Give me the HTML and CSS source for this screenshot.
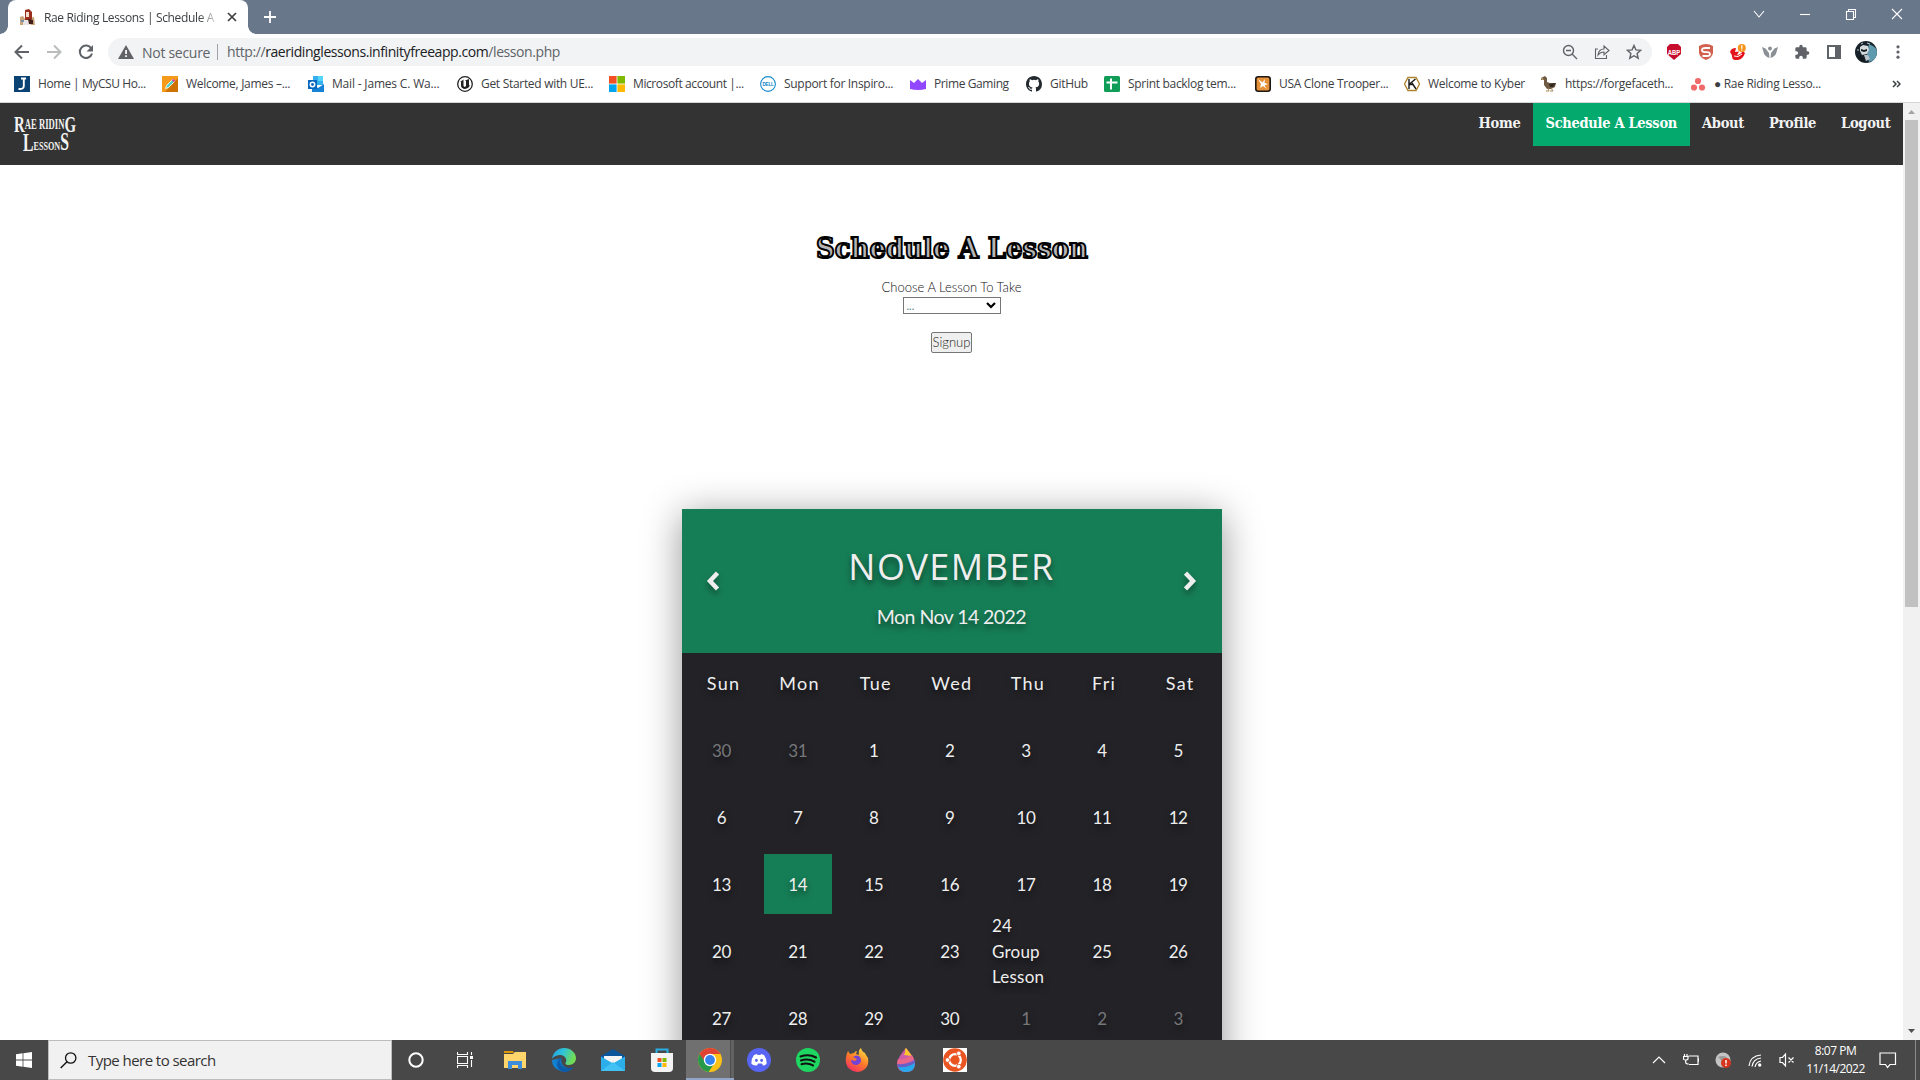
FILE: index.html
```html
<!DOCTYPE html>
<html lang="en">
<head>
<meta charset="utf-8">
<title>Rae Riding Lessons | Schedule A Lesson</title>
<link rel="stylesheet" href="styles.css">
</head>
<body>
<div class="tabstrip">
  <div class="tab">
    <svg class="favicon" width="15" height="16" viewBox="0 0 15 16"><path d="M0 8l3-1 2 3v6H0zM10 9l4-1 1 8h-5z" fill="#c9a27a"/><path d="M5 1l4-1 3 3v7l-2 3-5-2z" fill="#9b2f1d"/><path d="M6 3h3v5H6z" fill="#f5dfcc"/><path d="M3 11h8v5H3z" fill="#e9e5e4"/><path d="M8 10l5 1v4H9z" fill="#402019"/><path d="M1 11h3v2H1z" fill="#7394ab"/></svg>
    <span class="tab-title">Rae Riding Lessons | Schedule A L</span>
    <svg class="tab-close" width="10" height="10" viewBox="0 0 10 10"><path d="M1 1l8 8M9 1L1 9" stroke="#3c4043" stroke-width="1.7"/></svg>
  </div>
  <svg class="newtab" width="14" height="14" viewBox="0 0 14 14"><path d="M7 1v12M1 7h12" stroke="#fff" stroke-width="1.8"/></svg>
  <div class="window-buttons">
    <svg viewBox="0 0 12 12"><path d="M1 3l5 6 5-6" /></svg>
    <svg viewBox="0 0 12 12"><path d="M1 6.500h10"/></svg>
    <svg viewBox="0 0 12 12"><path d="M1.500 3.500h7v8h-7zM3.500 3.500v-2h7v8h-2"/></svg>
    <svg viewBox="0 0 12 12"><path d="M1 1l10 10M11 1L1 11"/></svg>
  </div>
</div>

<div class="toolbar">
  <div class="nav-icons">
    <svg viewBox="0 0 16 16"><path d="M15 8H2M8 1.500L1.500 8 8 14.500" fill="none" stroke="#5f6368" stroke-width="2"/></svg>
    <svg viewBox="0 0 16 16"><path d="M1 8h13M8 1.500L14.500 8 8 14.500" fill="none" stroke="#babcbe" stroke-width="2"/></svg>
    <svg viewBox="0 0 16 16"><path d="M13.300 4.500A6.200 6.200 0 1 0 14 9.500" fill="none" stroke="#5f6368" stroke-width="2"/><path d="M15 1v6.500H8.500z" fill="#5f6368"/></svg>
  </div>
  <div class="omnibox">
    <svg width="16" height="14" viewBox="0 0 16 14"><path d="M8 0l8 14H0z" fill="#5f6368"/><path d="M7.200 5h1.700v4H7.200zM7.200 10.300h1.700V12H7.200z" fill="#fff"/></svg>
    <span class="insecure">Not secure</span>
    <span class="divider"></span>
    <span class="url">http://<b>raeridinglessons.infinityfreeapp.com</b>/lesson.php</span>
    <div class="omni-icons">
      <svg viewBox="0 0 16 16"><g fill="none" stroke="#5f6368" stroke-width="1.400"><circle cx="6.500" cy="6.500" r="5"/><path d="M10 10l5 5M4 6.500h5"/></g></svg>
      <svg viewBox="0 0 16 16"><path d="M4 5H1.500v9.500h11V11M4 11c.5-4 2.500-6 6-6V2l5 4.500-5 4.200V8C7.500 8 5.500 9 4 11z" fill="none" stroke="#5f6368" stroke-width="1.100"/></svg>
      <svg viewBox="0 0 16 16"><path d="M8 1.500l1.900 4.400 4.800.4-3.600 3.200 1.100 4.700L8 11.700l-4.200 2.500 1.100-4.700-3.600-3.200 4.800-.4z" fill="none" stroke="#5f6368" stroke-width="1.400"/></svg>
    </div>
  </div>
  <div class="extensions">
    <svg viewBox="0 0 16 16"><path d="M4 0h8l3 3v7l-7 6-7-6V3z" fill="#c70d2c"/><text x="1.800" y="10.500" font-size="7" font-weight="bold" fill="#fff" class="mini" textLength="12.500" lengthAdjust="spacingAndGlyphs">ABP</text></svg>
    <svg viewBox="0 0 16 16"><path d="M1 2q7-4 14 0v7q-1 5-7 7-6-2-7-7z" fill="#d2604f"/><path d="M12 4H7.500Q4 4 4 6t3 2.200h2Q12 8.200 12 10.200T8.500 12H4.500" fill="none" stroke="#fff" stroke-width="1.800"/></svg>
    <svg viewBox="0 0 16 16"><path d="M0 8Q1 4 6 4L5 8l4-.5L7 11q3 0 6-4l2 2q-2 6-7 7-6 1-6-4 0-1-2-4z" fill="#e3121b"/><path d="M4 12q4 2 8-2" stroke="#fff" fill="none"/><circle cx="11.800" cy="4" r="4" fill="#f7941d"/><path d="M11.200 1.300h1.200v3.400h-1.200zM11.200 5.400h1.200v1.200h-1.200z" fill="#fff"/></svg>
    <svg viewBox="0 0 16 16"><g fill="#8a9095"><circle cx="8" cy="4.500" r="2"/><path d="M0 3l3.500 1.500L7 9l.5 5Q2 12 1.500 8zM16 3l-3.500 1.500L9 9l-.5 5Q14 12 14.500 8z"/></g></svg>
    <svg viewBox="0 0 24 24"><path d="M20.500 11H19V7a2 2 0 0 0-2-2h-4V3.500a2.500 2.500 0 0 0-5 0V5H4a2 2 0 0 0-2 2v3.800h1.500a2.700 2.700 0 0 1 0 5.400H2V20a2 2 0 0 0 2 2h3.800v-1.500a2.700 2.700 0 0 1 5.400 0V22H17a2 2 0 0 0 2-2v-4h1.500a2.500 2.500 0 0 0 0-5z" fill="#5f6368"/></svg>
    <svg viewBox="0 0 16 16"><path d="M2 2h12v12H2z" fill="#fff" stroke="#5f6368" stroke-width="2"/><path d="M9 2h5v12H9z" fill="#5f6368"/></svg>
    <svg class="avatar" viewBox="0 0 22 22"><circle cx="11" cy="11" r="11" fill="#17222a"/><path d="M14 3q8 3 8 8 0 8-8 10l-2-8z" fill="#5f9aae"/><path d="M5 6l3-2 5 1 1 4-2 4-5 1-2-4z" fill="#d5dadd"/><path d="M6 8l3 1 3-1v2l-3 1-3-1zM3 14l3 1 4 3-1 3-4-2z" fill="#161b1f"/><path d="M9 14l4 0 2 4-4 2z" fill="#b9c5ca"/><path d="M6 3l2-1M12 2l3 1M3 8v2" stroke="#b7c3c9"/></svg>
    <svg viewBox="0 0 16 16"><g fill="#5f6368"><circle cx="8" cy="2.800" r="1.600"/><circle cx="8" cy="8" r="1.600"/><circle cx="8" cy="13.200" r="1.600"/></g></svg>
  </div>
</div>

<div class="bookmarks">
  <a><svg viewBox="0 0 16 16"><path d="M0 0h16v16H0z" fill="#0b4274"/><path d="M7 2.500h5M9.800 2.500V10q0 3.500-5.300 3" fill="none" stroke="#fff" stroke-width="1.900"/></svg><span class="tight">Home | MyCSU Ho...</span></a>
  <a><svg viewBox="0 0 16 16"><path d="M0 0h16v16H0z" fill="#f59a1b"/><path d="M16 2v14H3z" fill="#cf7206"/><path d="M3.500 12.500l1-3 6.500-6.500 2 2L6.500 11.500z" fill="#55cfc4" stroke="#fff" stroke-width=".8"/><path d="M10.500 3.500l2 2" stroke="#d43f92" stroke-width="2"/></svg><span>Welcome, James –...</span></a>
  <a><svg viewBox="0 0 16 16"><path d="M5 0h10v9H5z" fill="#35b0ee"/><path d="M10 0h5v5h-5z" fill="#55d5fa"/><path d="M4 8l6 4 6-4v8H4z" fill="#1682d5"/><path d="M0 4h9v9H0z" fill="#0766bd"/><circle cx="4.500" cy="8.500" r="2.200" fill="none" stroke="#fff" stroke-width="1.500"/></svg><span class="loose">Mail - James C. Wa...</span></a>
  <a><svg viewBox="0 0 16 16"><circle cx="8" cy="8" r="7.300" fill="#fff" stroke="#222" stroke-width="1.300"/><path d="M3 6l3.500-2.500V10l1.200 1L9 10V5L8 4.500l4-1.500v6.500l1-.5q-1 3.500-5 4-3.500-.5-4-3V6z" fill="#222"/></svg><span>Get Started with UE...</span></a>
  <a><svg viewBox="0 0 16 16"><path d="M0 0h7.600v7.600H0z" fill="#f25022"/><path d="M8.400 0H16v7.600H8.400z" fill="#7fba00"/><path d="M0 8.400h7.600V16H0z" fill="#00a4ef"/><path d="M8.400 8.400H16V16H8.400z" fill="#ffb900"/></svg><span class="tight">Microsoft account |...</span></a>
  <a><svg viewBox="0 0 16 16"><circle cx="8" cy="8" r="7.400" fill="#fff" stroke="#168ccb" stroke-width="1.100"/><text x="2.500" y="10" font-size="5.500" font-weight="bold" fill="#0b83c6" class="mini" textLength="11" lengthAdjust="spacingAndGlyphs">DELL</text></svg><span>Support for Inspiro...</span></a>
  <a><svg viewBox="0 0 16 16"><path d="M0 4l4 3 4-4 4 4 4-3v9q-8 2-16 0z" fill="#9147ff"/></svg><span class="tight">Prime Gaming</span></a>
  <a><svg viewBox="0 0 16 16"><path fill="#24292f" d="M8 0C3.580 0 0 3.580 0 8c0 3.540 2.290 6.530 5.470 7.590.4.070.55-.17.55-.38 0-.19-.01-.82-.01-1.490-2.010.37-2.530-.49-2.690-.94-.09-.23-.48-.94-.82-1.130-.28-.15-.68-.52-.01-.53.63-.01 1.080.58 1.230.82.72 1.210 1.870.87 2.330.66.070-.52.28-.87.51-1.070-1.780-.2-3.640-.89-3.640-3.950 0-.87.31-1.590.82-2.150-.08-.2-.36-1.020.08-2.120 0 0 .67-.21 2.200.82a7.600 7.600 0 0 1 4 0c1.530-1.040 2.200-.82 2.200-.82.44 1.100.16 1.920.08 2.120.51.56.82 1.270.82 2.150 0 3.070-1.870 3.750-3.650 3.950.29.25.54.73.54 1.480 0 1.070-.01 1.930-.01 2.200 0 .21.15.46.55.38A8 8 0 0 0 16 8c0-4.420-3.580-8-8-8z"/></svg><span>GitHub</span></a>
  <a><svg viewBox="0 0 16 16"><rect width="16" height="16" rx="1.500" fill="#0f9d58"/><path d="M7 2.500v11M2.500 6.500h11" stroke="#fff" stroke-width="2"/></svg><span>Sprint backlog tem...</span></a>
  <a><svg viewBox="0 0 16 16"><rect x=".8" y=".8" width="14.400" height="14.400" rx="2.500" fill="#e69138" stroke="#1c1712" stroke-width="1.600"/><path d="M3 3l4.500 3.500L10 3l-.5 4L13 8l-3.500 1.500L12 13l-4-3-3 2 1-4z" fill="#fff"/></svg><span>USA Clone Trooper...</span></a>
  <a><svg viewBox="0 0 16 16"><path d="M4 1.500h8l3.500 6.500L12 14.500H4L.5 8z" fill="#fff" stroke="#ae852a" stroke-width="1.400"/><path d="M5 3v10M5.500 8l6-5M8 7l4 6M5.500 8.500h3" stroke="#171717" stroke-width="1.400" fill="none"/></svg><span>Welcome to Kyber</span></a>
  <a><svg viewBox="0 0 16 16"><path d="M0 2l4-2 2 2v4l3 1h6l-1 4-4 2H6L3 9V4L0 4z" fill="#6f5b43"/><path d="M8 8l7-1-3 4H9z" fill="#322820"/><path d="M7 12l1 3H5M10 12l2 3H9" stroke="#a98758" fill="none"/><path d="M0 2l3 1-2 1z" fill="#d4bb7b"/></svg><span>https://forgefaceth...</span></a>
  <a><svg viewBox="0 0 16 16"><g fill="#f06a6a"><circle cx="8" cy="5" r="3.100"/><circle cx="4" cy="11.500" r="3.100"/><circle cx="12" cy="11.500" r="3.100"/></g></svg><span>● Rae Riding Lesso...</span></a>
  <svg class="more" viewBox="0 0 9 8"><path d="M1 1l3 3-3 3M5 1l3 3-3 3" fill="none" stroke="#3c4043" stroke-width="1.500"/></svg>
</div>

<div class="viewport">
  <div class="page">
    <header class="site-nav">
      <svg class="logo" width="66" height="42" viewBox="0 0 66 42">
        <g class="logo-text">
          <text x="0" y="19" textLength="62" lengthAdjust="spacingAndGlyphs"><tspan font-size="24">R</tspan><tspan font-size="14" dy="-3">AE RIDIN</tspan><tspan font-size="24" dy="3">G</tspan></text>
          <text x="9" y="38" textLength="46" lengthAdjust="spacingAndGlyphs"><tspan font-size="25">L</tspan><tspan font-size="13" dy="-1">ESSON</tspan><tspan font-size="25">S</tspan></text>
        </g>
      </svg>
      <nav><a>Home</a><a class="active">Schedule A Lesson</a><a>About</a><a>Profile</a><a>Logout</a></nav>
    </header>
    <main>
      <h1><svg width="276" height="40" viewBox="0 0 276 40"><text x="2" y="30" textLength="272" lengthAdjust="spacingAndGlyphs">Schedule A Lesson</text></svg></h1>
      <label>Choose A Lesson To Take</label>
      <div class="select"><span>...</span><svg width="10" height="7" viewBox="0 0 10 7"><path d="M1 1l4 4 4-4" fill="none" stroke="#000" stroke-width="2.200"/></svg></div>
      <button>Signup</button>

      <section class="calendar">
        <div class="month">
          <svg class="arrow" width="14" height="22" viewBox="0 0 14 22"><path d="M11.500 3L4 11l7.500 8" /></svg>
          <div class="month-text">
            <h2>November</h2>
            <p>Mon Nov 14 2022</p>
          </div>
          <svg class="arrow" width="14" height="22" viewBox="0 0 14 22"><path d="M1.500 3L9 11l-7.500 8" /></svg>
        </div>
        <div class="weekdays"><div>Sun</div><div>Mon</div><div>Tue</div><div>Wed</div><div>Thu</div><div>Fri</div><div>Sat</div></div>
        <div class="days">
          <div class="other">30</div><div class="other">31</div><div>1</div><div>2</div><div>3</div><div>4</div><div>5</div>
          <div>6</div><div>7</div><div>8</div><div>9</div><div>10</div><div>11</div><div>12</div>
          <div>13</div><div class="today">14</div><div>15</div><div>16</div><div>17</div><div>18</div><div>19</div>
          <div>20</div><div>21</div><div>22</div><div>23</div><div class="event">24<br>Group<br>Lesson</div><div>25</div><div>26</div>
          <div>27</div><div>28</div><div>29</div><div>30</div><div class="other">1</div><div class="other">2</div><div class="other">3</div>
        </div>
      </section>
    </main>
  </div>
  <div class="scrollbar">
    <svg width="17" height="17" viewBox="0 0 17 17"><path d="M5 11h7L8.500 7z" fill="#a3a3a3"/></svg>
    <div class="thumb"></div>
    <svg width="17" height="17" viewBox="0 0 17 17"><path d="M5 6h7l-3.500 4z" fill="#505050"/></svg>
  </div>
</div>

<footer class="taskbar">
  <div class="start"><svg width="16" height="16" viewBox="0 0 16 16"><path d="M0 2.200L6.600 1.300v6.300H0zM7.400 1.200L16 0v7.600H7.400zM0 8.400h6.600v6.300L0 13.800zM7.400 8.400H16V16l-8.600-1.200z" fill="#fff"/></svg></div>
  <div class="search"><svg width="17" height="17" viewBox="0 0 17 17"><circle cx="10.700" cy="6" r="5.200" fill="none" stroke="#111" stroke-width="1.300"/><path d="M7 9.800L.7 16" stroke="#111" stroke-width="1.400"/></svg><span>Type here to search</span></div>
  <div class="apps">
    <i><svg width="16" height="16" viewBox="0 0 16 16"><circle cx="8" cy="8" r="6.700" fill="none" stroke="#fff" stroke-width="2"/></svg></i>
    <i><svg width="16" height="16" viewBox="0 0 16 16"><path d="M.5 0v2.500h10V0M.5 4.500h10v7H.5zM.5 16v-2.500h10V16M14.500 0v3M14.500 8v7" fill="none" stroke="#fff" stroke-width="1.100"/><path d="M13 4h3v3h-3z" fill="#fff"/></svg></i>
    <i class="gap"><svg width="22" height="20" viewBox="0 0 22 20"><path d="M0 1h9l1 2H0z" fill="#d9980c"/><path d="M0 4h9l2-2h11v16H0z" fill="#ffd56c"/><path d="M4 11h14v8h-4v-4H8v4H4z" fill="#3c8ddb"/></svg></i>
    <i><svg width="24" height="24" viewBox="0 0 24 24"><defs><linearGradient id="e1" x1="0" x2="1" y1="0" y2=".3"><stop offset="0" stop-color="#209ce0"/><stop offset=".5" stop-color="#2fc4d8"/><stop offset="1" stop-color="#72dd53"/></linearGradient><linearGradient id="e2" x1="0" x2="1"><stop offset="0" stop-color="#1289db"/><stop offset="1" stop-color="#0c4b8c"/></linearGradient></defs><path d="M0 12A12 12 0 0 0 21.500 19C14 22 8 17 9.500 10Z" fill="url(#e2)"/><path d="M0 11C1 4 6 0 12 0c7 0 12 5 12 10 0 4-3 7-7 7-4 0-4-2-3-3 1-2 0-6-5-7-4 0-8 2-9 4z" fill="url(#e1)"/><path d="M10 9.500C5 12 8 21 15 20.500c3 0 5-.5 6.500-1.500C19 23 15 24 12 24 4 22 3 12 10 9.500z" fill="#0e5aa8"/></svg></i>
    <i><svg width="24" height="22" viewBox="0 0 24 22"><path d="M0 7l12-7 12 7v5H0z" fill="#0b559b"/><path d="M3 7h18v8H3z" fill="#f4f4f4"/><path d="M0 7.500l12 7 12-7V22H0z" fill="#2baeea"/><path d="M0 22l12-9 12 9z" fill="#42c1f4"/></svg></i>
    <i><svg width="24" height="24" viewBox="0 0 24 24"><path d="M6.500 6V1.500h11V6" fill="none" stroke="#29aee5" stroke-width="2"/><path d="M1 5h22v15q0 4-4 4H5q-4 0-4-4z" fill="#f3f3f3"/><path d="M7.500 10h4v4h-4z" fill="#f25022"/><path d="M12.500 10h4v4h-4z" fill="#7fba00"/><path d="M7.500 15h4v4h-4z" fill="#00a4ef"/><path d="M12.500 15h4v4h-4z" fill="#ffb900"/></svg></i>
    <i class="running"><svg width="24" height="24" viewBox="0 0 24 24"><circle cx="12" cy="12" r="12" fill="#fbc116"/><path d="M1.600 6A12 12 0 0 0 10.500 23.900L17 14.500 12 12z" fill="#26994a"/><path d="M1.600 6A12 12 0 0 1 22.400 6H12l-5 8z" fill="#df4335"/><circle cx="12" cy="12" r="6.200" fill="#fff"/><circle cx="12" cy="12" r="4.900" fill="#3683ef"/></svg></i>
    <i><svg width="24" height="24" viewBox="0 0 24 24"><circle cx="12" cy="12" r="12" fill="#5865f2"/><path d="M7 7l3-1 .6 1h2.800l.6-1 3 1q3 4 2.500 9-2 1.500-3.500 1.500l-1-2h-4l-1 2Q6.500 17.500 4.500 16 4 11 7 7z" fill="#fff"/><ellipse cx="9.400" cy="12.300" rx="1.400" ry="1.600" fill="#5865f2"/><ellipse cx="14.600" cy="12.300" rx="1.400" ry="1.600" fill="#5865f2"/></svg></i>
    <i><svg width="24" height="24" viewBox="0 0 24 24"><circle cx="12" cy="12" r="12" fill="#1ed760"/><path d="M4.500 8.500Q13 5.500 20 9.500M5 12.500q7-2.500 13.500 1.200M5.500 16.200q6-1.800 11.500 1.200" stroke="#111" stroke-width="2.100" stroke-linecap="round" fill="none"/></svg></i>
    <i><svg width="24" height="24" viewBox="0 0 24 24"><defs><linearGradient id="f1" x1=".8" x2=".2" y1="0" y2="1"><stop offset="0" stop-color="#ffe13f"/><stop offset=".5" stop-color="#ff7a28"/><stop offset="1" stop-color="#f02a68"/></linearGradient></defs><path d="M3 3l2 3 4-1q1-2 3-2l-1 3 3 1q-1-5 2-7 1 4 4 5l1 2 2 3q1 6-2 10-4 4-9 4-9-1-11-9-1-6 2-12z" fill="url(#f1)"/><path d="M8 9q4-3 7 0 3 6-3 8-6 0-6-5l4 1 2-2z" fill="#7442d6"/></svg></i>
    <i><svg width="20" height="24" viewBox="0 0 20 24"><path d="M10 0q8 9 9 15 0 9-9 9t-9-9Q2 9 10 0z" fill="#cf5bab"/><path d="M9 1l1-1 6 8-8-1q2-3 1-6z" fill="#fec629"/><path d="M2 11q7 1 14-4l2 4Q10 17 1 16z" fill="#e9678b"/><path d="M1 16q10 1 18-4v3Q13 21 3 20z" fill="#665fc6"/><path d="M2 19q10 1 17-4 0 9-9 9-6 0-8-5z" fill="#28a9ed"/></svg></i>
    <i><svg width="24" height="24" viewBox="0 0 24 24"><path d="M0 0h24v24H0z" fill="#fff"/><circle cx="12" cy="12" r="11.800" fill="#e95420"/><circle cx="12" cy="12" r="5.800" fill="none" stroke="#fff" stroke-width="2.300"/><path d="M12 12l4-7M12 12l4 7M12 12H3" stroke="#e95420" stroke-width="1"/><g fill="#fff" stroke="#e95420" stroke-width=".8"><circle cx="4.500" cy="12" r="2.300"/><circle cx="15.800" cy="5.400" r="2.300"/><circle cx="15.800" cy="18.600" r="2.300"/></g></svg></i>
  </div>
  <div class="tray">
    <i><svg viewBox="0 0 16 16"><path d="M2 11l6-6 6 6"/></svg></i>
    <i><svg viewBox="0 0 16 16"><path d="M5.500 4H15v8.500H6M15.500 6.500v3M1.500 2v2.500M4 2v2.500M.5 4.500H5v2Q5 8 2.700 8T.5 6.500zM2.700 8v2.500q0 1.500 3 1.500"/></svg></i>
    <i><svg viewBox="0 0 16 16"><circle cx="8" cy="8" r="7.500" fill="#c4c4c4" stroke="none"/><path d="M3 5q5-2 9 0l-3 2v5l-4-5z" fill="#999" stroke="none"/><circle cx="11" cy="11" r="5" fill="#d7341d" stroke="none"/><path d="M11 8v3.500M11 12.500V14" stroke-width="1.500"/></svg></i>
    <i><svg viewBox="0 0 16 16"><path d="M2 14Q3 4 14 3M5 14.500Q6 7 14 6M8 15q1-5 6-6"/><circle cx="12.700" cy="13" r="1.700" fill="#fff" stroke="none"/></svg></i>
    <i><svg viewBox="0 0 16 16"><path d="M1 5.500h2.500L6.500 2v12L3.500 10.500H1zM9.500 5.500l5 5M14.500 5.500l-5 5"/></svg></i>
    <div class="clock"><span>8:07 PM</span><span>11/14/2022</span></div>
    <svg class="notify" viewBox="0 0 18 17"><path d="M1 1h15.500v11.500h-5.500L8.500 15.500 6.500 12.500H1z"/></svg>
    <span class="desktop-edge"></span>
  </div>
</footer>
</body>
</html>
```

FILE: styles.css
```css
* { box-sizing: border-box; }
body {
  margin: 0; width: 1920px; height: 1080px; overflow: hidden;
  display: flex; flex-direction: column;
  font-family: "Open Sans", "Noto Sans", sans-serif; background: #fff;
}
svg { display: block; flex: none; }
h1, h2, p { margin: 0; font-weight: normal; }
.mini { font-family: "Liberation Sans", sans-serif; }

/* Browser tabs */
.tabstrip { height: 34px; background: #68778a; display: flex; align-items: center; padding-left: 8px; flex: none; }
.tab {
  width: 240px; height: 34px; background: #fff; border-radius: 8px 8px 0 0;
  display: flex; align-items: center; padding-left: 12px; position: relative;
}
.tab::before, .tab::after { content: ""; position: absolute; bottom: 0; width: 8px; height: 8px; }
.tab::before { left: -8px; background: radial-gradient(circle at 0 0, #68778a 7.500px, #fff 8px); }
.tab::after { right: -8px; background: radial-gradient(circle at 100% 0, #68778a 7.500px, #fff 8px); }
.tab-title {
  width: 174px; margin-left: 9px; font-size: 12px; letter-spacing: -0.350px; color: #3c4043;
  white-space: nowrap; overflow: hidden;
  -webkit-mask-image: linear-gradient(90deg, #000 155px, transparent 176px);
}
.tab-close { margin-left: 9px; }
.newtab { margin-left: 15px; }
.window-buttons { margin-left: auto; display: flex; gap: 34px; padding: 0 17px 6px 0; }
.window-buttons svg { width: 12px; height: 12px; fill: none; stroke: #fff; stroke-width: 1.100; }

/* Address bar */
.toolbar { height: 36px; display: flex; align-items: center; padding: 0 6px; flex: none; }
.nav-icons, .extensions { display: flex; }
.nav-icons { width: 102px; padding-left: 8px; gap: 16px; }
.nav-icons svg { width: 16px; height: 16px; }
.omnibox {
  width: 1544px; height: 28px; border-radius: 14px; background: #f1f3f4;
  display: flex; align-items: center; padding: 0 10px; font-size: 14px; line-height: 27px; color: #5f6368;
}
.insecure { width: 68px; margin-left: 8px; letter-spacing: -0.280px; white-space: nowrap; }
.divider { width: 1px; height: 16px; background: #9fa2a5; margin: 0 9px 0 7px; }
.url { letter-spacing: -0.420px; padding-bottom: 1px; }
.url b { font-weight: normal; color: #202124; }
.omni-icons { margin-left: auto; display: flex; gap: 16px; }
.omni-icons svg { width: 16px; height: 16px; }
.extensions { padding-left: 14px; gap: 16px; align-items: center; }
.extensions svg { width: 16px; height: 16px; }
.extensions .avatar { width: 22px; height: 22px; margin: 0 -3px; }

/* Bookmarks */
.bookmarks {
  height: 33px; border-bottom: 1px solid #d4d6d8; padding: 0 0 4px 14px; flex: none;
  display: grid; align-items: center; color: #3c4043; font-size: 12px; letter-spacing: -0.300px;
  grid-template-columns: 148px 146px 149px 152px 151px 150px 116px 78px 151px 149px 137px 149px 202px 12px;
}
.bookmarks a { display: flex; align-items: center; gap: 8px; white-space: nowrap; }
.bookmarks a svg { width: 16px; height: 16px; }
.bookmarks span { padding-bottom: 1px; }
.bookmarks .tight { letter-spacing: -0.400px; }
.bookmarks .loose { letter-spacing: -0.180px; }
.more { width: 9px; height: 8px; }

/* Site */
.viewport { height: 937px; display: flex; flex: none; overflow: hidden; }
.page { width: 1903px; overflow: hidden; }
.site-nav { height: 62px; background: #333; display: flex; justify-content: space-between; }
.logo { margin: 10px 0 0 14px; overflow: visible; }
.logo-text { font-family: "Liberation Serif", serif; font-weight: bold; fill: #f2f2f2; }
.site-nav nav { display: flex; }
.site-nav nav a {
  height: 43px; padding: 8px 12.500px 0; line-height: 24px; color: #f2f2f2; white-space: nowrap;
  font-family: "DejaVu Serif Condensed", "DejaVu Serif", serif; font-stretch: condensed;
  font-weight: bold; font-size: 14.500px; letter-spacing: -0.300px;
}
.site-nav nav .active { background: #04aa6d; color: #fff; }
main { display: flex; flex-direction: column; align-items: center; padding-top: 63px; color: #444; font-family: Lato, sans-serif; }
h1 svg { overflow: visible; }
h1 text {
  font-family: "DejaVu Serif", serif; font-weight: bold; font-size: 28px;
  fill: #b5b5b5; stroke: #000; stroke-width: 2px;
}
label { margin-top: 11px; height: 18px; line-height: 17px; font-size: 13px; font-weight: 300; color: #111; }
.select {
  width: 98px; height: 17px; border: 1px solid #767676; display: flex; align-items: center;
  justify-content: space-between; padding: 0 4px 0 3px; font-size: 11px; color: #587c8a;
}
button {
  width: 41px; height: 21px; margin-top: 18px; padding: 0 0 2px; border: 1px solid #767676; border-radius: 2px;
  background: #efefef; color: #222; font: 300 13px Lato, sans-serif;
}

/* Calendar */
.calendar {
  width: 540px; height: 640px; flex: none; margin-top: 156px; background: #222227; color: #eee;
  box-shadow: 0 6px 36px rgba(0, 0, 0, .42); text-shadow: 0 4px 6px rgba(0, 0, 0, .5);
}
.month { height: 144px; background: #167e56; display: flex; justify-content: space-between; align-items: center; padding: 0 24px; }
.month-text { text-align: center; }
.month h2 {
  font-family: "Open Sans", sans-serif; font-size: 36px; line-height: 44px; text-transform: uppercase;
  letter-spacing: 1.500px; margin: 12px 0 16px;
}
.month p { font-size: 19.500px; line-height: 24px; letter-spacing: -0.550px; }
.arrow { filter: drop-shadow(0 4px 3px rgba(0, 0, 0, .4)); }
.arrow path { fill: none; stroke: #eee; stroke-width: 4.500; }
.weekdays, .days { display: grid; grid-template-columns: repeat(7, 76.100px); padding-left: 2px; }
.weekdays { height: 60px; align-items: center; text-align: center; font-size: 18px; letter-spacing: 1.300px; padding-left: 4px; }
.days { padding-top: 3px; grid-auto-rows: 67.100px; }
.days div { margin: 3.500px 4px; padding-top: 1px; display: flex; align-items: center; justify-content: center; font-size: 17px; letter-spacing: -0.400px; }
.days .other { color: #77777a; }
.days .today { background: #167e56; }
.days .event { display: block; margin: -5px 4px; line-height: 25.500px; letter-spacing: 0.250px; }

.scrollbar { width: 17px; background: #f1f1f1; display: flex; flex-direction: column; padding-bottom: 0; }
.thumb { width: 13px; height: 487px; margin: 0 2px auto; background: #c1c1c1; }

/* Taskbar */
.taskbar { height: 40px; background: #484848; display: flex; flex: none; color: #fff; }
.start { width: 48px; display: flex; align-items: center; justify-content: center; }
.search {
  width: 344px; background: #f1f1f1; border: 1px solid #bdbdbd; color: #333;
  display: flex; align-items: center; padding-left: 11px; gap: 11px; font-size: 15px; letter-spacing: -0.550px;
}
.apps { display: flex; margin-left: -1px; }
.apps i { width: 49px; display: flex; align-items: center; justify-content: center; }
.apps .gap { margin-left: 1px; }
.apps .running {
  background: linear-gradient(90deg, #707070 44px, #4d4d4d 44px, #4d4d4d 45px, #626262 45px);
  width: 48px; border-bottom: 2px solid #91a6c9; padding-top: 2px;
}
.tray { margin-left: auto; display: flex; align-items: center; }
.tray i { width: 32px; display: flex; justify-content: center; }
.tray svg { width: 16px; height: 16px; fill: none; stroke: #fff; stroke-width: 1.200; }
.clock { width: 65px; display: flex; flex-direction: column; align-items: center; font-size: 12px; line-height: 18px; letter-spacing: -0.500px; white-space: nowrap; }
.tray .notify { width: 18px; height: 17px; margin: 0 18px 0 11px; }
.desktop-edge { width: 5px; height: 40px; border-left: 1px solid #8a8a8a; }
```
